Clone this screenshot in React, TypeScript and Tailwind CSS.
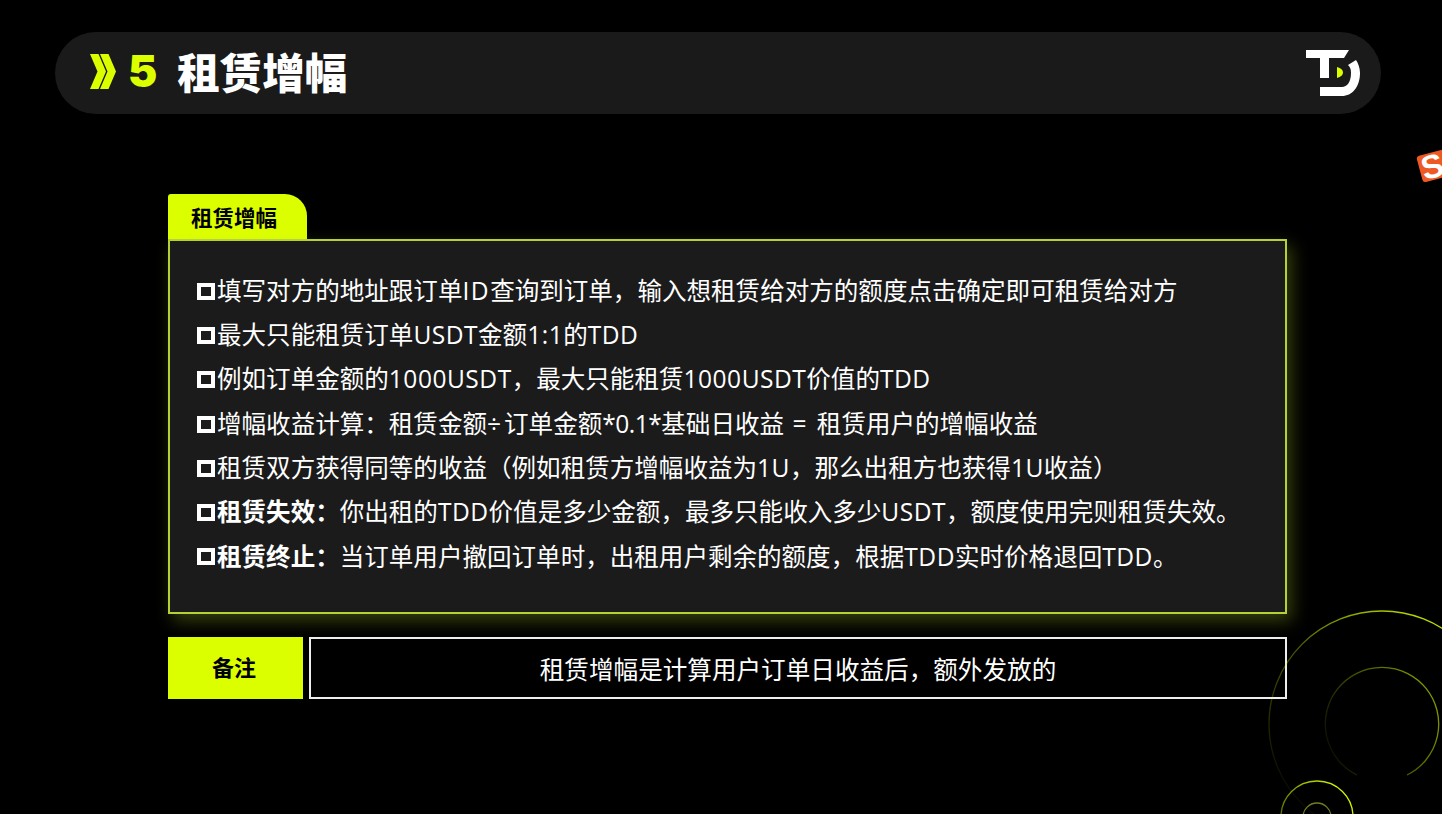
const lines: { b?: string; t: string }[] = [
  { t: "填写对方的地址跟订单ID查询到订单，输入想租赁给对方的额度点击确定即可租赁给对方" },
  { t: "最大只能租赁订单USDT金额1:1的TDD" },
  { t: "例如订单金额的1000USDT，最大只能租赁1000USDT价值的TDD" },
  { t: "增幅收益计算：租赁金额÷订单金额*0.1*基础日收益 = 租赁用户的增幅收益" },
  { t: "租赁双方获得同等的收益（例如租赁方增幅收益为1U，那么出租方也获得1U收益）" },
  { b: "租赁失效：", t: "你出租的TDD价值是多少金额，最多只能收入多少USDT，额度使用完则租赁失效。" },
  { b: "租赁终止：", t: "当订单用户撤回订单时，出租用户剩余的额度，根据TDD实时价格退回TDD。" },
];

const font = { fontFamily: '"Open Sans", "Noto Sans CJK SC", sans-serif' };
const cjk = { fontFamily: '"Noto Sans CJK SC", sans-serif' };

function Runs({ text }: { text: string }) {
  const parts = text.split(/(÷| = |[A-Za-z0-9.:*]+)/).filter(Boolean);
  return (
    <span className="whitespace-pre">
      {parts.map((p, i) => {
        if (p === "÷") return <span key={i} className="tracking-[3px]">{p}</span>;
        if (p === " = ") return <span key={i} className="tracking-[2px]">{p}</span>;
        if (p === "ID") return <span key={i} className="tracking-[1.5px]">{p}</span>;
        if (p === "*0.1*") return <span key={i} className="tracking-[-0.5px]">{p}</span>;
        if (/^[A-Za-z0-9.:*]+$/.test(p)) return <span key={i} className="tracking-[0.5px]">{p}</span>;
        return <span key={i}>{p}</span>;
      })}
    </span>
  );
}

function Logo() {
  return (
    <svg width="54" height="46" viewBox="0 0 54 46" className="shrink-0">
      <path d="M0 0H43L38 8H23V28H14V8H0Z" fill="#fff" />
      <path d="M14 37H36C41 37 45 32 45 23C45 19 44 17 42 15L50 10C52 13 54 18 54 23C54 37 46 46 36 46H14Z" fill="#fff" />
      <path d="M31 17C35 18 37 20 37 22.5C37 25 35 27 31 28Z" fill="#dcff00" />
    </svg>
  );
}

export default function App() {
  return (
    <div className="relative w-[1442px] h-[814px] overflow-hidden bg-black text-white" style={font}>
      <header className="mx-[55px] mt-8 h-[82px] w-[1326px] rounded-[41px] bg-[#1a1a1a] flex items-center pl-[35px] pr-[21px]">
        <div className="flex items-center -mt-[4px]">
          <svg width="26" height="35" viewBox="0 0 26 35" className="shrink-0">
            <path d="M0 0H8.5L16 17.5L8.5 35H0L7.5 17.5Z" fill="#dcff00" />
            <path d="M10 0H18.5L26 17.5L18.5 35H10L17.5 17.5Z" fill="#dcff00" />
          </svg>
          <span className="ml-[12px] text-[#dcff00] text-[44px] leading-none font-black" style={{ fontFamily: 'Inter, sans-serif' }}>5</span>
          <h1 className="ml-[20px] text-[42.5px] leading-none font-black text-white" style={cjk}>租赁增幅</h1>
        </div>
        <div className="ml-auto -mt-[1px]"><Logo /></div>
      </header>

      <main className="ml-[168px] mt-20 w-[1119px]">
        <div className="w-[139px] h-[46px] bg-[#dcff00] rounded-tr-[22px] rounded-tl-[3px] flex items-center pl-[23px] text-black text-[21.5px] font-bold" style={cjk}>租赁增幅</div>
        <section className="-mt-px h-[375px] border-2 border-[#b4d234] bg-[#1b1b1b] shadow-[5px_7px_16px_rgba(190,225,40,0.28)] pl-[27px] pt-[28px]">
          {lines.map((l, i) => (
            <div key={i} className="flex items-center h-[44.3px] text-[24.55px] whitespace-nowrap">
              <span className="w-[18px] h-[17px] border-[4.5px] border-white mr-[2px] shrink-0" />
              {l.b && <span className="font-bold">{l.b}</span>}
              <Runs text={l.t} />
            </div>
          ))}
        </section>
        <div className="flex gap-[6px] mt-[23px] h-[62px]">
          <div className="w-[135px] bg-[#dcff00] text-black text-[22px] font-bold flex items-center justify-center pb-[4px] pr-[3px]" style={cjk}>备注</div>
          <div className="flex-1 border-2 border-[#eeeeee] flex items-center justify-center text-[24.6px]" style={cjk}>租赁增幅是计算用户订单日收益后，额外发放的</div>
        </div>
      </main>

      <div className="absolute left-[1419px] top-[151px] w-[40px] h-[27px] bg-[#ee5a24] rounded-[3px] -rotate-[15deg] flex items-center pl-[2px] text-white text-[33px] leading-none font-black overflow-hidden" style={{ fontFamily: '"Liberation Sans", sans-serif' }}>S</div>

      <svg className="absolute left-[1260px] top-[600px] pointer-events-none" width="182" height="214" viewBox="1260 600 182 214" fill="none">
        <defs>
          <linearGradient id="g1" gradientUnits="userSpaceOnUse" x1="1290" y1="800" x2="1442" y2="620">
            <stop offset="0" stopColor="#dcff00" stopOpacity="0.03" />
            <stop offset="0.5" stopColor="#dcff00" stopOpacity="0.35" />
            <stop offset="1" stopColor="#dcff00" stopOpacity="0.9" />
          </linearGradient>
          <linearGradient id="g2" gradientUnits="userSpaceOnUse" x1="1330" y1="760" x2="1440" y2="710">
            <stop offset="0" stopColor="#dcff00" stopOpacity="0.05" />
            <stop offset="1" stopColor="#dcff00" stopOpacity="0.6" />
          </linearGradient>
          <linearGradient id="g3" gradientUnits="userSpaceOnUse" x1="1285" y1="815" x2="1335" y2="782">
            <stop offset="0" stopColor="#dcff00" stopOpacity="0.45" />
            <stop offset="1" stopColor="#dcff00" stopOpacity="0.95" />
          </linearGradient>
        </defs>
        <circle cx="1382" cy="724" r="113" stroke="url(#g1)" strokeWidth="1.3" />
        <path d="M1357 775A56.7 56.7 0 1 1 1407 775" stroke="url(#g2)" strokeWidth="1.3" />
        <circle cx="1317" cy="817" r="36" stroke="url(#g3)" strokeWidth="1.3" />
        <circle cx="1317" cy="817" r="14" stroke="#6f8020" strokeWidth="1.3" />
      </svg>
    </div>
  );
}
